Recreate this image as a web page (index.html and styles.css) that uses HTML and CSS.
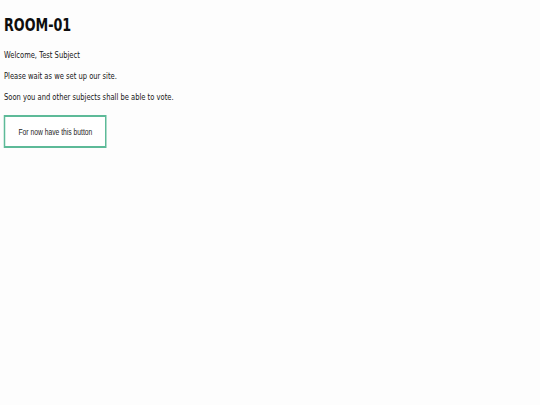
FILE: index.html
```html
<!DOCTYPE html>
<html>
<head>
<meta charset="utf-8">
<title>ROOM-01</title>
<link rel="stylesheet" href="styles.css">
</head>
<body>
<main class="page">
  <h1 class="title">ROOM-01</h1>
  <p class="line">Welcome, Test Subject</p>
  <p class="line">Please wait as we set up our site.</p>
  <p class="line">Soon you and other subjects shall be able to vote.</p>
  <button class="btn" type="button">For now have this button</button>
</main>
</body>
</html>
```

FILE: styles.css
```css
html, body {
  margin: 0;
  padding: 0;
  background: #fdfdfd;
  overflow: hidden;
}
body {
  width: 540px;
  height: 405px;
}
.page {
  width: 540px;
  padding: 15px 0 0 5.33px;
  box-sizing: border-box;
  transform: scaleX(0.75);
  transform-origin: 0 0;
  font-family: "DejaVu Sans", sans-serif;
  color: #161616;
  display: flow-root;
}
.title {
  margin: 0 0 15px;
  font-size: 17px;
  line-height: 20px;
  font-weight: bold;
  color: #0d0d0d;
}
.line {
  margin: 10px 0;
  font-size: 9px;
  line-height: 11px;
}
.btn {
  display: flex;
  align-items: center;
  justify-content: center;
  margin-top: 12px;
  width: 137px;
  height: 33px;
  padding: 0;
  background: #ffffff;
  border: 2px solid #5dba98;
  border-radius: 0;
  font-family: "Liberation Sans", Arial, sans-serif;
  font-size: 9px;
  color: #1e1e1e;
}
```
